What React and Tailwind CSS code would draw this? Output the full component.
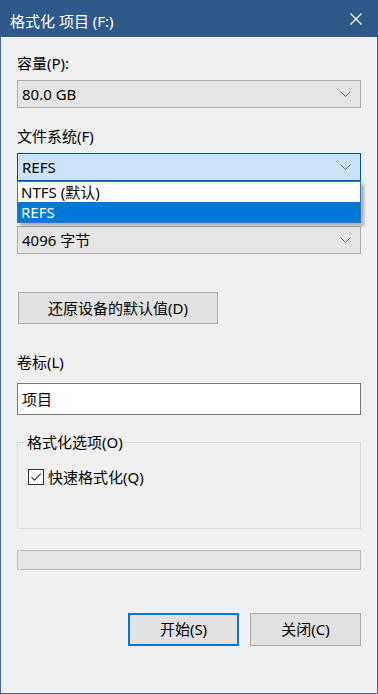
import React from "react";

function Chevron() {
  return (
    <svg width="11" height="6" viewBox="0 0 11 6" className="shrink-0">
      <path d="M0.5 0.5 L5.5 5.5 L10.5 0.5" stroke="#5f5f5f" strokeWidth="1" fill="none" />
    </svg>
  );
}

function Combo({ value, focused }) {
  return (
    <div
      className={
        "h-[28px] flex items-center justify-between pl-[4px] pr-[9px] border " +
        (focused ? "bg-[#cce4f7] border-[#005499]" : "bg-[#e5e5e5] border-[#adadad]")
      }
    >
      <span className="leading-none">{value}</span>
      <Chevron />
    </div>
  );
}

export default function App() {
  return (
    <div className="w-[378px] h-[694px] bg-[#f0f0f0] font-['Noto_Sans','Noto_Sans_CJK_SC',sans-serif] text-[15px] text-black flex flex-col overflow-hidden">
      <div className="h-[37px] bg-[#2d5a88] flex items-center justify-between pl-[10px] pr-[16px] shrink-0">
        <span className="text-white text-[15px] pt-[5px]">格式化 项目 (F:)</span>
        <svg width="12" height="12" viewBox="0 0 12 12" className="mt-[1px]">
          <path d="M0.5 0.5 L11.5 11.5 M11.5 0.5 L0.5 11.5" stroke="#ffffff" strokeWidth="1.2" />
        </svg>
      </div>
      <div className="flex-1 border-x border-b border-[#3e6796] px-[16px] flex flex-col">
        <div className="h-[20px] mt-[16px] flex items-center">容量(P):</div>
        <div className="mt-[7px]">
          <Combo value="80.0 GB" />
        </div>
        <div className="h-[20px] mt-[18px] flex items-center">文件系统(F)</div>
        <div className="mt-[7px] relative">
          <Combo value="REFS" focused />
          <div className="absolute left-0 right-0 top-[28px] z-10 border border-[#2c7bd0] bg-white shadow-[3px_3px_3px_rgba(0,0,0,0.28)]">
            <div className="h-[20px] flex items-center pl-[3px] bg-white">NTFS (默认)</div>
            <div className="h-[20px] flex items-center pl-[3px] bg-[#0078d7] text-white">REFS</div>
          </div>
        </div>
        <div className="h-[20px] mt-[18px]" />
        <div className="mt-[7px]">
          <Combo value="4096 字节" />
        </div>
        <div className="mt-[38px] pl-[1px]">
          <div className="w-[200px] h-[32px] border border-[#adadad] bg-[#e1e1e1] flex items-center justify-center">
            还原设备的默认值(D)
          </div>
        </div>
        <div className="h-[20px] mt-[28px] flex items-center">卷标(L)</div>
        <div className="mt-[11px] h-[32px] bg-white border border-[#7a7a7a] flex items-center pl-[4px]">
          项目
        </div>
        <div className="mt-[27px] h-[87px] border border-[#dcdcdc] relative">
          <span className="absolute left-[7px] top-[-11px] h-[20px] px-[2px] bg-[#f0f0f0] flex items-center">
            格式化选项(O)
          </span>
          <div className="mt-[23px] ml-[10px] flex items-center gap-[4px]">
            <svg width="16" height="16" viewBox="0 0 16 16" className="shrink-0">
              <rect x="0.5" y="0.5" width="15" height="15" fill="#ffffff" stroke="#333333" />
              <path d="M3.5 8.2 L6.5 11.2 L12.8 4.6" stroke="#333333" strokeWidth="1.1" fill="none" />
            </svg>
            <span>快速格式化(Q)</span>
          </div>
        </div>
        <div className="mt-[21px] h-[20px] border border-[#bcbcbc] bg-[#e6e6e6]" />
        <div className="mt-[43px] flex justify-end gap-[11px]">
          <div className="w-[111px] h-[33px] border-2 border-[#0078d7] bg-[#e1e1e1] flex items-center justify-center">
            开始(S)
          </div>
          <div className="w-[111px] h-[33px] border border-[#adadad] bg-[#e1e1e1] flex items-center justify-center">
            关闭(C)
          </div>
        </div>
      </div>
    </div>
  );
}
